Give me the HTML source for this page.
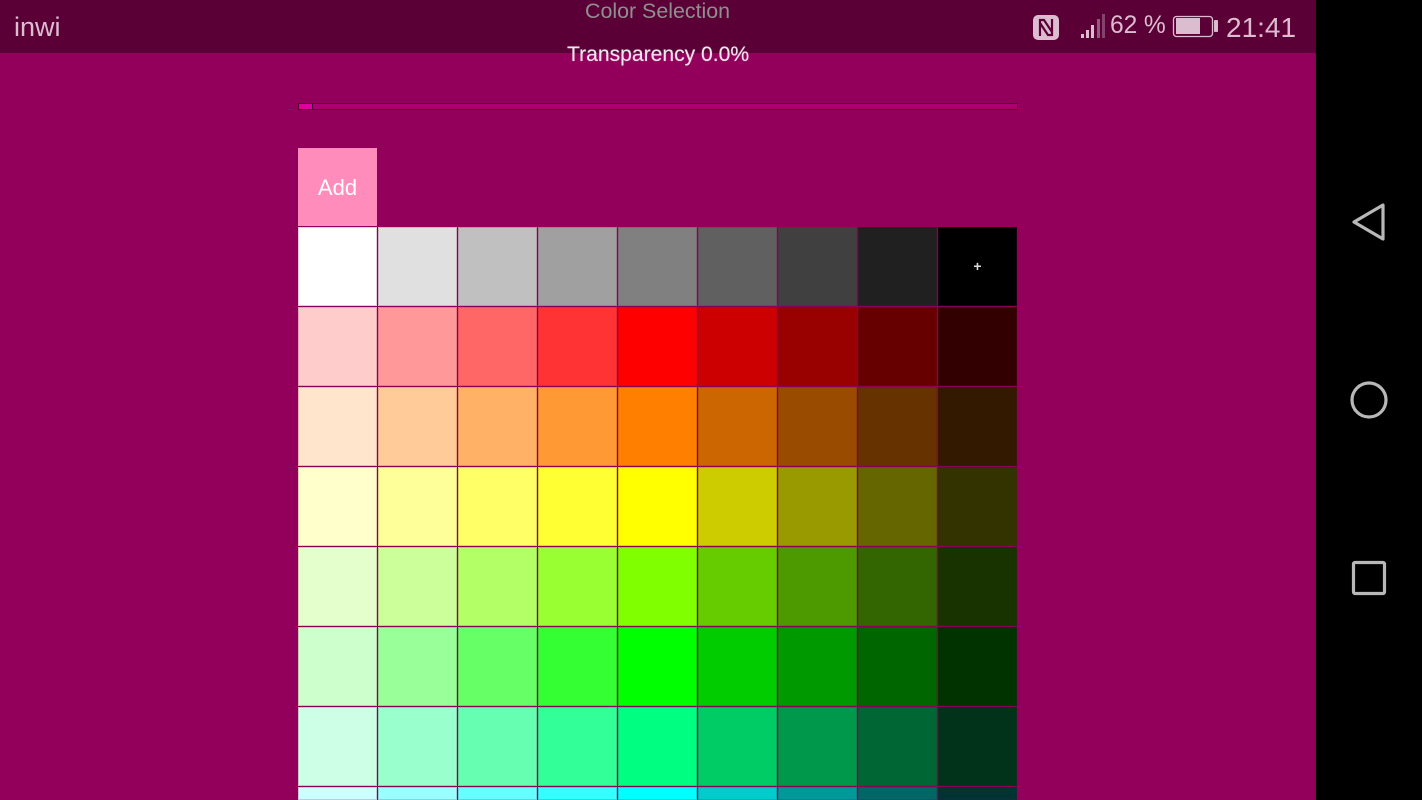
<!DOCTYPE html>
<html><head><meta charset="utf-8"><style>
html,body{margin:0;padding:0;width:1422px;height:800px;overflow:hidden}
body{position:relative;background:#92005c;font-family:"Liberation Sans",sans-serif}
#w{position:absolute;left:0;top:0;width:1422px;height:800px;overflow:hidden}
.a{position:absolute;white-space:nowrap}
#g{position:absolute;left:298px;top:227px;width:719px;height:573px;overflow:hidden;display:grid;grid-template-columns:repeat(9,79px);grid-template-rows:repeat(7,79px) 13px;gap:1px;background:#8a0057}
#g div{box-shadow:inset 0 0 0 1px rgba(130,0,80,.2)}
</style></head><body><div id="w">
<div class="a" style="left:0;top:0;width:1316px;height:53px;background:#5b0037"></div>
<div class="a" style="left:1316px;top:0;width:106px;height:800px;background:#000"></div>
<div class="a" style="left:14px;top:13px;font-size:27px;line-height:29px;color:#dcbccf">inwi</div>
<div class="a" style="left:585px;top:0;height:24px;overflow:hidden;font-size:21.4px;line-height:22px;color:#8f8f8f">Color Selection</div>
<div class="a" style="left:567px;top:42px;font-size:21.1px;line-height:26px;color:#f2e6ed;text-shadow:0 0 1px rgba(255,255,255,.5)">Transparency 0.0%</div>
<svg class="a" style="left:1030px;top:10px" width="180" height="35" viewBox="0 0 180 35">
<rect x="3" y="5" width="26" height="25" rx="5" fill="#dcbccf"/>
<path d="M10 26V10h4l8 12M22 9V25h-4L10 13" fill="none" stroke="#5b0037" stroke-width="2.2"/>
<rect x="51" y="24" width="3" height="4" fill="#dcbccf"/><rect x="56" y="20" width="3" height="8" fill="#dcbccf"/><rect x="61" y="15" width="3" height="13" fill="#dcbccf"/>
<rect x="67" y="9" width="3" height="19" fill="#a5789a" opacity=".75"/><rect x="72" y="4" width="3" height="24" fill="#a5789a" opacity=".55"/>
</svg>
<div class="a" style="left:1110px;top:10px;font-size:24.6px;line-height:32px;color:#dcbccf;letter-spacing:-.1px">62 %</div>
<svg class="a" style="left:1170px;top:10px" width="60" height="35" viewBox="0 0 60 35">
<rect x="3.5" y="6.5" width="39" height="20" rx="3" fill="none" stroke="#dcbccf" stroke-width="1.3"/>
<rect x="6" y="8" width="24" height="16" fill="#dcbccf"/>
<rect x="44" y="10" width="4" height="12" rx="1" fill="#dcbccf"/>
</svg>
<div class="a" style="left:1226px;top:12px;font-size:28px;line-height:32px;color:#dcbccf">21:41</div>
<div class="a" style="left:298px;top:103px;width:718px;height:5px;background:#ad0070;border:1px solid #5b0037"></div>
<div class="a" style="left:299px;top:104px;width:13px;height:5px;background:#e0009a;border-right:1px solid #3c0026"></div>
<div class="a" style="left:298px;top:148px;width:79px;height:78px;background:#ff8cba;color:#fff;font-size:22px;line-height:79px;text-align:center">Add</div>
<div id="g">
<div style="background:#fff"></div><div style="background:#e0e0e0"></div><div style="background:#c0c0c0"></div><div style="background:#a0a0a0"></div><div style="background:#808080"></div><div style="background:#606060"></div><div style="background:#404040"></div><div style="background:#202020"></div><div style="background:#000;color:#ddd;font-size:14px;font-weight:bold;line-height:79px;height:79px;overflow:hidden;text-align:center">+</div>
<div style="background:#fcc"></div><div style="background:#f99"></div><div style="background:#f66"></div><div style="background:#f33"></div><div style="background:#f00"></div><div style="background:#c00"></div><div style="background:#900"></div><div style="background:#600"></div><div style="background:#300"></div>
<div style="background:#ffe5cc"></div><div style="background:#fc9"></div><div style="background:#ffb266"></div><div style="background:#f93"></div><div style="background:#ff8000"></div><div style="background:#c60"></div><div style="background:#994c00"></div><div style="background:#630"></div><div style="background:#331900"></div>
<div style="background:#ffc"></div><div style="background:#ff9"></div><div style="background:#ff6"></div><div style="background:#ff3"></div><div style="background:#ff0"></div><div style="background:#cc0"></div><div style="background:#990"></div><div style="background:#660"></div><div style="background:#330"></div>
<div style="background:#e5ffcc"></div><div style="background:#cf9"></div><div style="background:#b2ff66"></div><div style="background:#9f3"></div><div style="background:#80ff00"></div><div style="background:#6c0"></div><div style="background:#4c9900"></div><div style="background:#360"></div><div style="background:#193300"></div>
<div style="background:#cfc"></div><div style="background:#9f9"></div><div style="background:#6f6"></div><div style="background:#3f3"></div><div style="background:#0f0"></div><div style="background:#0c0"></div><div style="background:#090"></div><div style="background:#060"></div><div style="background:#030"></div>
<div style="background:#ccffe5"></div><div style="background:#9fc"></div><div style="background:#66ffb2"></div><div style="background:#3f9"></div><div style="background:#00ff80"></div><div style="background:#0c6"></div><div style="background:#00994c"></div><div style="background:#063"></div><div style="background:#003319"></div>
<div style="background:#cff"></div><div style="background:#9ff"></div><div style="background:#6ff"></div><div style="background:#3ff"></div><div style="background:#0ff"></div><div style="background:#0cc"></div><div style="background:#099"></div><div style="background:#066"></div><div style="background:#033"></div>
</div>
<svg class="a" style="left:1330px;top:190px" width="80" height="420" viewBox="0 0 80 420" fill="none" stroke="#b8b8b8" stroke-width="3.2" stroke-linejoin="round">
<path d="M24 32L53 15V49Z"/>
<circle cx="39" cy="210" r="17"/>
<rect x="23.5" y="372.5" width="31" height="31" rx="1.5"/>
</svg>
</div></body></html>
